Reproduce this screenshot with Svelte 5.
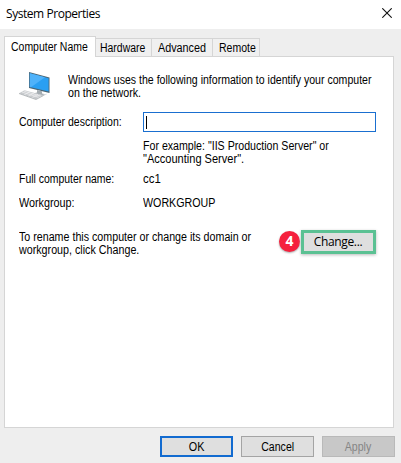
<script>
  let tabs = [
    { label: 'Computer Name', w: 92, s: 0.872, pad: 6 },
    { label: 'Hardware', w: 56, s: 0.87, pad: 4 },
    { label: 'Advanced', w: 61, s: 0.9, pad: 6 },
    { label: 'Remote', w: 47, s: 0.875, pad: 6 }
  ];
</script>

{#snippet text(value, scale)}<span class="t" style="transform:scaleX({scale})">{value}</span>{/snippet}

<div class="window">
  <header>
    <span class="title">System Properties</span>
    <svg class="close" width="10" height="10" viewBox="0 0 10 10"><path d="M.3.3 9.7 9.7M9.7.3.3 9.7" stroke="#111" stroke-width="1.1" fill="none" /></svg>
  </header>
  <nav>
    {#each tabs as tab, i}
      <div class="tab" class:active={i === 0} style="width:{tab.w}px;padding-left:{tab.pad}px">{@render text(tab.label, tab.s)}</div>
    {/each}
  </nav>
  <main>
    <section class="intro">
      <svg class="pc" width="32" height="28" viewBox="0 0 32 28">
        <path d="M10 0 30.5 5.5V21L10 16Z" fill="#4c6675" />
        <path d="M10.8 1.2 29.6 6.3V19.6L10.8 15Z" fill="#2a9ff2" />
        <path d="M10.8 1.2 26 5.3 12 15.3 10.8 15Z" fill="#4fb2fa" />
        <path d="M18 18 23 19.2V21.5L27.5 22.5 23 24 14 21.5 18 20.5Z" fill="#a4acb1" />
        <path d="M14 21.3 23 23.5 27.5 22.2" stroke="#dde1e4" fill="none" />
        <path d="M5.5 18.2 24 23.3 17 27.3 0 21.3Z" fill="#c8cbce" />
        <path d="M3 20 20.5 25.6M4.8 19 22.4 24.4M5 23 11 19.6M9 24.4 15 21M13 25.7 19 22.3" stroke="#f0f1f2" stroke-width=".7" />
        <path d="M0 21.5 17 27.5 24.5 23.5" stroke="#9ba0a4" stroke-width=".7" fill="none" />
      </svg>
      <p>{@render text('Windows uses the following information to identify your computer', 0.88)}<br />{@render text('on the network.', 0.89)}</p>
    </section>
    <section class="row desc"><span class="lab">{@render text('Computer description:', 0.875)}</span><div class="input"><i></i></div></section>
    <p class="example">{@render text('For example: "IIS Production Server" or', 0.885)}<br />{@render text('"Accounting Server".', 0.92)}</p>
    <section class="row full"><span class="lab">{@render text('Full computer name:', 0.87)}</span>{@render text('cc1', 0.95)}</section>
    <section class="row group"><span class="lab">{@render text('Workgroup:', 0.9)}</span>{@render text('WORKGROUP', 0.89)}</section>
    <section class="rename">
      <p>{@render text('To rename this computer or change its domain or', 0.89)}<br />{@render text('workgroup, click Change.', 0.893)}</p>
      <b class="badge">4</b>
      <button class="change">Change...</button>
    </section>
  </main>
  <footer>
    <button class="ok">{@render text('OK', 0.9)}</button>
    <button>{@render text('Cancel', 0.88)}</button>
    <button class="apply">{@render text('Apply', 0.88)}</button>
  </footer>
</div>

<style>
  :global(body) { margin: 0; overflow: hidden; }
  * { box-sizing: border-box; }
  .window { width: 401px; height: 463px; background: #eee; display: flex; flex-direction: column; font: 12px/13px "Liberation Sans", Arial, sans-serif; color: #000; white-space: nowrap; }
  .t { display: inline-block; transform-origin: left; vertical-align: top; }
  header { height: 29px; background: #fff; display: flex; justify-content: space-between; padding: 6px 9px 0 6px; }
  .title { font: 12px/16px "Open Sans", sans-serif; letter-spacing: -.45px; color: #000; }
  .close { margin-top: 2px; }
  nav { height: 27px; padding: 7px 0 0 4px; display: flex; align-items: flex-start; }
  .tab { height: 18px; margin-top: 2px; border: 1px solid #d5d5d5; border-left: 0; border-bottom: 0; padding-top: 3px; background: #f0f0f0; }
  .tab.active { height: 21px; margin-top: 0; border-left: 1px solid #d5d5d5; padding-top: 4px; background: #fff; position: relative; z-index: 1; }
  main { width: 390px; height: 372px; margin-left: 4px; border: 1px solid #d5d5d5; background: #fff; padding: 15px 0 0 14px; }
  p { margin: 0; }
  .intro { display: flex; height: 40px; }
  .pc { margin: 0 17px 0 0; flex: none; }
  .intro p { margin-top: 2px; }
  .row { display: flex; }
  .lab { width: 124px; flex: none; }
  .desc { height: 20px; }
  .desc .lab { padding-top: 4px; }
  .input { width: 233px; height: 20px; border: 1px solid #1a6fd0; padding: 3px 0 0 2px; }
  .input i { display: block; width: 1px; height: 13px; background: #000; }
  .example { margin: 8px 0 0 124px; }
  .full { margin-top: 7px; }
  .group { margin-top: 11px; }
  .rename { margin-top: 17px; display: flex; height: 36px; }
  .rename p { width: 260px; padding-top: 4px; flex: none; }
  .badge { width: 21px; height: 21px; flex: none; margin-top: 4px; border-radius: 50%; background: #f5203d; color: #fff; font: bold 14px/20px "Open Sans", sans-serif; text-align: center; box-shadow: 0 1px 2px #aaa; }
  button { width: 73px; height: 21px; border: 1px solid #a4a4a4; background: #dfdfdf; font: inherit; padding: 2px 0 0; color: #000; }
  button .t { transform-origin: center; }
  .change { width: 75px; height: 24px; flex: none; border: 3px solid #5bc193; box-shadow: 0 1px 3px #bbb; margin: 3px 0 0 1px; font: 12px/16px "Open Sans", sans-serif; letter-spacing: -.35px; padding: 0 1px 0 0; }
  footer { display: flex; gap: 8px; padding: 8px 0 0 160px; }
  .ok { border: 2px solid #126bd0; }
  .apply { background: #c8c8c8; border-color: #b9b9b9; color: #858585; }
</style>
